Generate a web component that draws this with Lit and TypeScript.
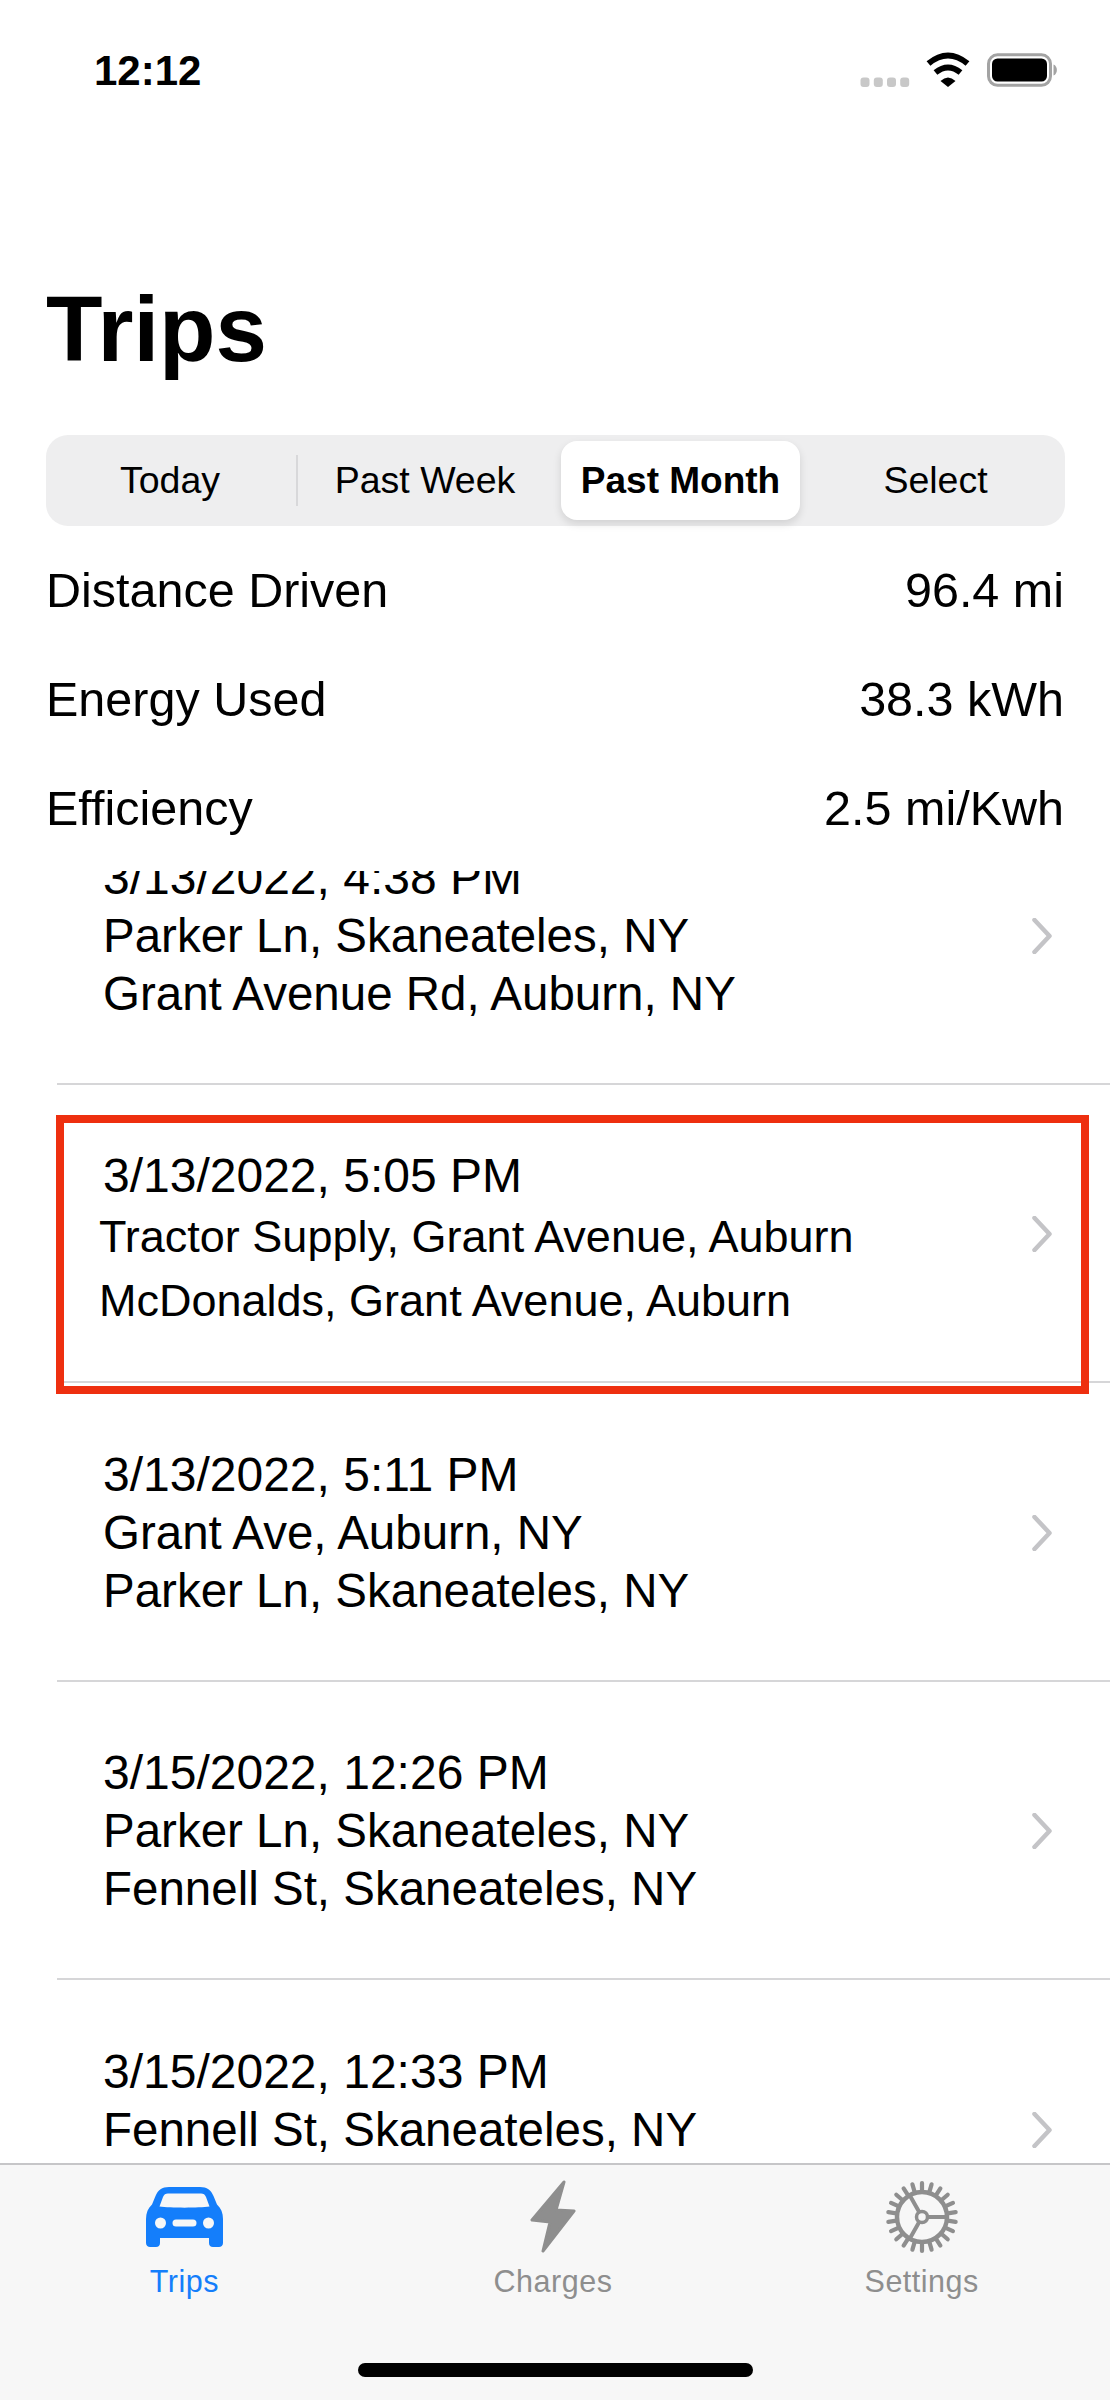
import { LitElement, html, css, svg } from "lit";
import { customElement } from "lit/decorators.js";

const trips = [
  { date: "3/13/2022, 4:38 PM", from: "Parker Ln, Skaneateles, NY", to: "Grant Avenue Rd, Auburn, NY" },
  { date: "3/13/2022, 5:05 PM", from: "Tractor Supply, Grant Avenue, Auburn", to: "McDonalds, Grant Avenue, Auburn", marked: true },
  { date: "3/13/2022, 5:11 PM", from: "Grant Ave, Auburn, NY", to: "Parker Ln, Skaneateles, NY" },
  { date: "3/15/2022, 12:26 PM", from: "Parker Ln, Skaneateles, NY", to: "Fennell St, Skaneateles, NY" },
  { date: "3/15/2022, 12:33 PM", from: "Fennell St, Skaneateles, NY", to: "Parker Ln, Skaneateles, NY" },
];

const stats = [
  ["Distance Driven", "96.4 mi"],
  ["Energy Used", "38.3 kWh"],
  ["Efficiency", "2.5 mi/Kwh"],
];

const statusIcons = svg`<svg class="status-icons" width="198" height="36" viewBox="0 0 198 36">
  <g fill="#c8c8c8">
    <rect x="0.500" y="25.500" width="9" height="9.500" rx="3" /><rect x="13.800" y="25.500" width="9" height="9.500" rx="3" />
    <rect x="27" y="25.500" width="9" height="9.500" rx="3" /><rect x="40.200" y="25.500" width="9" height="9.500" rx="3" />
  </g>
  <path d="M68.500 11.500Q88 -4.500 107.500 11.500" fill="none" stroke="#000" stroke-width="6" />
  <path d="M75.500 20.500Q88 10.500 100.500 20.500" fill="none" stroke="#000" stroke-width="6" />
  <path d="M80.500 29Q88 22 95.500 29L88 35Z" fill="#000" />
  <rect x="128.500" y="2.800" width="62" height="30.500" rx="9" fill="none" stroke="#a3a3a3" stroke-width="3" />
  <rect x="132" y="6.500" width="55" height="23" rx="5.500" fill="#000" />
  <path d="M193.500 12.500C198 14 198 22 193.500 23.500Z" fill="#a3a3a3" />
</svg>`;

const carIcon = svg`<svg width="77" height="60" viewBox="0 0 77 60">
  <path fill="#147efb" fill-rule="evenodd" d="M23 0H54C61 0 65 3 67.500 9L71 17.500C75 21 77 26 77 32V56C77 58.500 75 60 73 60H67C64.500 60 63 58.500 63 56V51H14V56C14 58.500 12.500 60 10 60H4C2 60 0 58.500 0 56V32C0 26 2 21 6 17.500L9.500 9C12 3 16 0 23 0ZM22 6.500C19.500 6.500 18 7.500 17 10L13.500 19.500C24 21 53 21 63.500 19.500L60 10C59 7.500 57.500 6.500 55 6.500ZM14.500 30.500A5.500 5.500 0 1 0 14.500 41.500A5.500 5.500 0 1 0 14.500 30.500ZM62.500 30.500A5.500 5.500 0 1 0 62.500 41.500A5.500 5.500 0 1 0 62.500 30.500ZM30 32.500A3.500 3.500 0 0 0 30 39.500H47A3.500 3.500 0 0 0 47 32.500Z" />
</svg>`;

const boltIcon = svg`<svg width="46" height="74" viewBox="0 0 46 74">
  <path fill="#8e8e8e" stroke="#8e8e8e" stroke-width="3" stroke-linejoin="round" d="M34 2L2 40L20 42L13 71L44 31L26 30Z" />
</svg>`;

const gearTeeth = Array.from({ length: 22 }, (_, i) => {
  const a = ((i + 0.5) * 2 * Math.PI) / 22;
  return svg`<line x1=${37 + 26 * Math.cos(a)} y1=${37 + 26 * Math.sin(a)} x2=${37 + 34 * Math.cos(a)} y2=${37 + 34 * Math.sin(a)} />`;
});

const gearIcon = svg`<svg width="74" height="74" viewBox="0 0 74 74">
  <g fill="none" stroke="#8e8e8e">
    <g stroke-width="4.200" stroke-linecap="round">${gearTeeth}</g>
    <circle cx="37" cy="37" r="25" stroke-width="4.500" />
    <circle cx="37" cy="37" r="5.500" stroke-width="3.500" />
    <path stroke-width="4" d="M43 37H62M34.200 32L24 14M34.200 42L24 60" />
  </g>
</svg>`;

const chevron = svg`<svg class="chevron" width="20" height="36" viewBox="0 0 20 36">
  <path d="M2.500 2L17.500 18L2.500 34" fill="none" stroke="#c4c4c7" stroke-width="4.500" stroke-linecap="round" stroke-linejoin="round" />
</svg>`;

@customElement("app-root")
export class AppRoot extends LitElement {
  static styles = css`
    :host {
      display: flex;
      flex-direction: column;
      width: 1110px;
      height: 2400px;
      overflow: hidden;
      background: #fff;
      color: #000;
      font-family: "Liberation Sans", Arial, sans-serif;
    }
    .status {
      display: flex;
      justify-content: space-between;
      align-items: flex-start;
      height: 230px;
      box-sizing: border-box;
      padding: 49px 52px 0 94px;
    }
    .time {
      font-size: 42px;
      line-height: 44px;
      font-weight: 700;
    }
    .status-icons {
      display: block;
      margin-top: 3px;
    }
    h1 {
      margin: 49px 0 56px 46px;
      height: 100px;
      font-size: 92.500px;
      line-height: 100px;
      font-weight: 700;
    }
    .segments {
      display: grid;
      grid-template-columns: 246px 263px 239px 259px;
      height: 79px;
      margin: 0 45px 0 46px;
      padding: 6px;
      background: #eeeeef;
      border-radius: 22px;
    }
    .segment {
      display: flex;
      align-items: center;
      justify-content: center;
      box-sizing: border-box;
      font-size: 37.500px;
    }
    .segment.today {
      height: 51px;
      align-self: center;
      padding-right: 8px;
      border-right: 2px solid #d8d8da;
    }
    .segment.week {
      padding-right: 9px;
    }
    .segment.select {
      padding-left: 12px;
    }
    .segment.active {
      background: #fff;
      border-radius: 16px;
      font-weight: 700;
      font-size: 37px;
      box-shadow: 0 4px 9px rgba(0, 0, 0, 0.12);
    }
    .stats {
      padding: 10px 46px 8px;
    }
    .stat {
      display: flex;
      justify-content: space-between;
      height: 109px;
      line-height: 109px;
      font-size: 48.500px;
    }
    .list {
      flex: 1;
      min-height: 0;
      overflow: hidden;
    }
    .rows {
      margin: -85px 0 0 57px;
    }
    .row {
      position: relative;
      display: flex;
      align-items: center;
      justify-content: space-between;
      box-sizing: border-box;
      height: 298.500px;
      padding: 3px 58px 0 46px;
      border-bottom: 2px solid #d6d6d8;
    }
    .lines {
      font-size: 47.500px;
      line-height: 58px;
    }
    .line {
      white-space: nowrap;
    }
    .line.date {
      font-size: 48px;
    }
    .row.marked .lines {
      padding-top: 12px;
    }
    .row.marked .line.small {
      font-size: 45px;
      line-height: 64px;
      margin-left: -4px;
    }
    .mark {
      position: absolute;
      left: -1px;
      top: 30px;
      width: 1033px;
      height: 279px;
      box-sizing: border-box;
      border: 8px solid #ee2f0f;
    }
    .chevron {
      display: block;
      flex: none;
    }
    .tabbar {
      display: flex;
      flex-direction: column;
      height: 237px;
      box-sizing: border-box;
      background: #f7f7f7;
      border-top: 2px solid #c6c6c8;
    }
    .tabs {
      display: grid;
      grid-template-columns: repeat(3, 1fr);
      padding: 15px 4px 0 0;
    }
    .tab {
      display: flex;
      flex-direction: column;
      align-items: center;
      color: #8e8e8e;
      font-size: 30.500px;
      line-height: 36px;
      letter-spacing: 0.5px;
    }
    .tab.active {
      color: #147efb;
    }
    .tab-icon {
      display: flex;
      align-items: center;
      justify-content: center;
      height: 74px;
      margin-bottom: 9px;
    }
    .home {
      width: 395px;
      height: 14px;
      margin: auto auto 23px;
      border-radius: 7px;
      background: #000;
    }
  `;

  render() {
    return html`
      <div class="status">
        <span class="time">12:12</span>
        ${statusIcons}
      </div>
      <h1>Trips</h1>
      <div class="segments">
        <div class="segment today">Today</div>
        <div class="segment week">Past Week</div>
        <div class="segment active">Past Month</div>
        <div class="segment select">Select</div>
      </div>
      <div class="stats">
        ${stats.map(([k, v]) => html`<div class="stat"><span>${k}</span><span>${v}</span></div>`)}
      </div>
      <div class="list">
        <div class="rows">
          ${trips.map(
            (t) => html`<div class="row ${t.marked ? "marked" : ""}">
              <div class="lines">
                <div class="line date">${t.date}</div>
                <div class="line small">${t.from}</div>
                <div class="line small">${t.to}</div>
              </div>
              ${chevron}
              ${t.marked ? html`<div class="mark"></div>` : ""}
            </div>`
          )}
        </div>
      </div>
      <div class="tabbar">
        <div class="tabs">
          <div class="tab active"><div class="tab-icon">${carIcon}</div>Trips</div>
          <div class="tab"><div class="tab-icon">${boltIcon}</div>Charges</div>
          <div class="tab"><div class="tab-icon">${gearIcon}</div>Settings</div>
        </div>
        <div class="home"></div>
      </div>
    `;
  }
}
